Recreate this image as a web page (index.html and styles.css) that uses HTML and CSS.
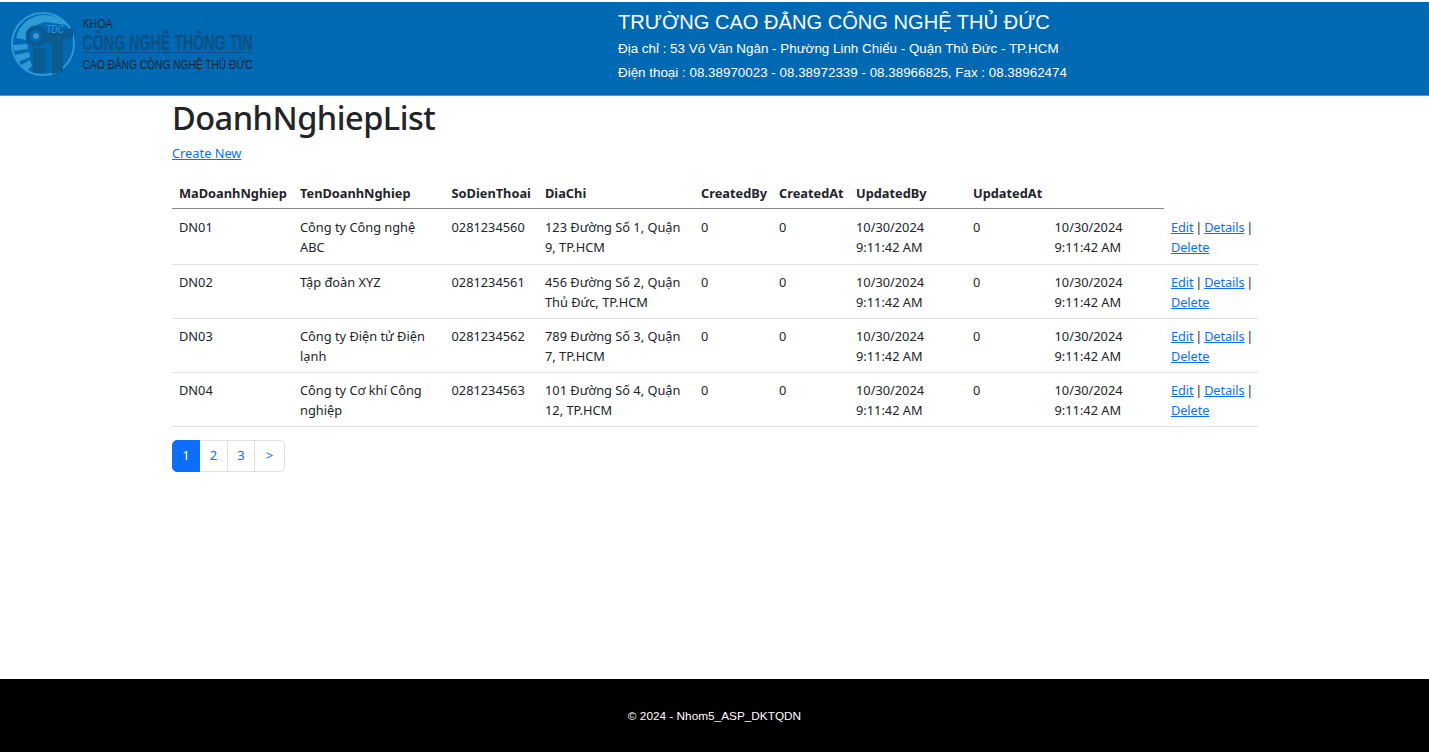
FILE: index.html
```html
<!DOCTYPE html>
<html lang="vi">
<head>
<meta charset="utf-8">
<title>DoanhNghiepList</title>
<link rel="stylesheet" href="styles.css">
</head>
<body>
<header class="site-header">
  <div class="logo">
    <svg class="logo-art" width="340" height="76" viewBox="10 10 340 76" aria-hidden="true">
      <circle cx="43" cy="44" r="31" fill="none" stroke="#2d9ad6" stroke-width="2"/>
      <path d="M43 15A29 29 0 0 0 16 38L27 40C28 31 34 24 46 22L67 25A29 29 0 0 0 43 15Z" fill="#2d9ad6"/>
      <path d="M13 45L27 44L28 49L14 51ZM15 55L29 52L30 57L18 62ZM20 66L30 60L32 66L26 71Z" fill="#2d9ad6"/>
      <circle cx="36" cy="36" r="8.5" fill="#0069b4" stroke="#0d5a8f" stroke-width="4"/>
      <circle cx="36" cy="36" r="3" fill="#4a93cc"/>
      <rect x="33" y="48" width="12" height="25" fill="#0d5a8f"/>
      <path d="M41 33L73 28L73 38L63 40L63 72L52 74L52 42L41 43Z" fill="#0d5a8f"/>
      <text x="46" y="33" class="logo-tdc" textLength="18" lengthAdjust="spacingAndGlyphs">TDC</text>
      <text x="82.5" y="27.5" class="logo-small" textLength="30" lengthAdjust="spacingAndGlyphs">KHOA</text>
      <text x="82.5" y="50" class="logo-big" textLength="170" lengthAdjust="spacingAndGlyphs">CÔNG NGHỆ THÔNG TIN</text>
      <line x1="82.5" y1="52.5" x2="252.5" y2="52.5" stroke="#0a5285" stroke-width="1"/>
      <text x="82.5" y="69" class="logo-small" textLength="170" lengthAdjust="spacingAndGlyphs">CAO ĐẲNG CÔNG NGHỆ THỦ ĐỨC</text>
    </svg>
  </div>
  <div class="school">
    <div class="school-name">TRƯỜNG CAO ĐẲNG CÔNG NGHỆ THỦ ĐỨC</div>
    <div class="school-line">Địa chỉ : 53 Võ Văn Ngân - Phường Linh Chiểu - Quận Thủ Đức - TP.HCM</div>
    <div class="school-line">Điện thoại : 08.38970023 - 08.38972339 - 08.38966825, Fax : 08.38962474</div>
  </div>
</header>
<main class="content">
  <h1 class="title">DoanhNghiepList</h1>
  <p class="create"><a href="#">Create New</a></p>
  <table class="data">
    <colgroup>
      <col class="c1"><col class="c2"><col class="c3"><col class="c4"><col class="c5"><col class="c6"><col class="c7"><col class="c8"><col class="c9"><col class="c10">
    </colgroup>
    <thead>
      <tr><th>MaDoanhNghiep</th><th>TenDoanhNghiep</th><th>SoDienThoai</th><th>DiaChi</th><th>CreatedBy</th><th>CreatedAt</th><th>UpdatedBy</th><th>UpdatedAt</th><th></th></tr>
    </thead>
    <tbody>
      <tr><td>DN01</td><td>Công ty Công nghệ ABC</td><td>0281234560</td><td>123 Đường Số 1, Quận 9, TP.HCM</td><td>0</td><td>0</td><td>10/30/2024 9:11:42 AM</td><td>0</td><td>10/30/2024 9:11:42 AM</td><td class="actions"><a href="#">Edit</a> | <a href="#">Details</a> | <a href="#">Delete</a></td></tr>
      <tr><td>DN02</td><td>Tập đoàn XYZ</td><td>0281234561</td><td>456 Đường Số 2, Quận Thủ Đức, TP.HCM</td><td>0</td><td>0</td><td>10/30/2024 9:11:42 AM</td><td>0</td><td>10/30/2024 9:11:42 AM</td><td class="actions"><a href="#">Edit</a> | <a href="#">Details</a> | <a href="#">Delete</a></td></tr>
      <tr><td>DN03</td><td>Công ty Điện tử Điện lạnh</td><td>0281234562</td><td>789 Đường Số 3, Quận 7, TP.HCM</td><td>0</td><td>0</td><td>10/30/2024 9:11:42 AM</td><td>0</td><td>10/30/2024 9:11:42 AM</td><td class="actions"><a href="#">Edit</a> | <a href="#">Details</a> | <a href="#">Delete</a></td></tr>
      <tr><td>DN04</td><td>Công ty Cơ khí Công nghiệp</td><td>0281234563</td><td>101 Đường Số 4, Quận 12, TP.HCM</td><td>0</td><td>0</td><td>10/30/2024 9:11:42 AM</td><td>0</td><td>10/30/2024 9:11:42 AM</td><td class="actions"><a href="#">Edit</a> | <a href="#">Details</a> | <a href="#">Delete</a></td></tr>
    </tbody>
  </table>
  <nav class="pager">
    <a class="page active" href="#">1</a><a class="page" href="#">2</a><a class="page" href="#">3</a><a class="page" href="#">&gt;</a>
  </nav>
</main>
<footer class="site-footer">© 2024 - Nhom5_ASP_DKTQDN</footer>
</body>
</html>
```
FILE: styles.css
```css
* { box-sizing: border-box; }
html, body { height: 100%; }
body {
  margin: 0;
  display: flex;
  flex-direction: column;
  min-height: 752px;
  font-family: "Noto Sans", "Open Sans", sans-serif;
  font-size: 12.8px;
  line-height: 19.6px;
  color: #212529;
  background: #fff;
  overflow: hidden;
}
a { color: #0d6efd; }

.site-header {
  height: 94px;
  flex: none;
  margin-top: 2px;
  background: #0069b4;
  border-bottom: 1px solid #4f97d0;
  display: flex;
  font-family: "Liberation Sans", Arial, sans-serif;
  color: #fff;
}
.logo { width: 618px; padding: 8px 0 0 10px; }
.logo-art { display: block; }
.logo-tdc { font: italic 10px "Liberation Sans", sans-serif; fill: #2d9ad6; }
.logo-small { font: 13.5px "Liberation Sans", sans-serif; fill: #1c2530; }
.logo-big { font: bold 22px "Liberation Sans", sans-serif; fill: #0a5285; stroke: #0a5285; stroke-width: 0.4px; }
.school { padding-top: 9px; }
.school-name { font-size: 20.1px; line-height: 23px; margin-bottom: 3px; }
.school-line { font-size: 13.4px; line-height: 24px; }

.content { flex: 1; width: 1086px; margin-left: 172px; }
.title { margin: 0; font-size: 32.5px; letter-spacing: -0.5px; font-weight: 500; line-height: 44px; }
.create { margin: 3px 0 13px; line-height: 20px; }

.data { border-collapse: collapse; table-layout: fixed; width: 1086px; }
.c1 { width: 121px; } .c2 { width: 151.5px; } .c3 { width: 93.5px; } .c4 { width: 156px; } .c5 { width: 78px; }
.c6 { width: 77px; } .c7 { width: 117px; } .c8 { width: 81.5px; } .c9 { width: 116.5px; } .c10 { width: 94px; }
.data th { padding: 8px 7px 4.5px; text-align: left; font-weight: 700; border-bottom: 1px solid #888; }
.data td { padding: 7px 7px 6px; line-height: 20px; vertical-align: top; border-bottom: 1px solid #dee2e6; }
.data tbody tr:first-child td { padding-top: 8px; padding-bottom: 7px; }
.data .actions { padding-right: 0; word-spacing: -1.4px; letter-spacing: -0.1px; }

.pager { display: flex; margin-top: 13px; }
.page {
  width: 28px; height: 32px;
  display: flex; align-items: center; justify-content: center;
  text-decoration: none;
  border: 1px solid #dee2e6;
  border-left: 0;
  font-size: 13px;
  background: #fff;
}
.page:first-child { border-left: 1px solid #0d6efd; border-radius: 5px 0 0 5px; }
.page:nth-child(3) { width: 27px; }
.page:last-child { border-radius: 0 5px 5px 0; width: 30px; }
.page.active { background: #0d6efd; border-color: #0d6efd; color: #fff; }

.site-footer {
  height: 73px;
  flex: none;
  padding-top: 2px;
  background: #000;
  color: #fff;
  font-family: "Liberation Sans", Arial, sans-serif;
  font-size: 11.8px;
  display: flex; align-items: center; justify-content: center;
}
```
